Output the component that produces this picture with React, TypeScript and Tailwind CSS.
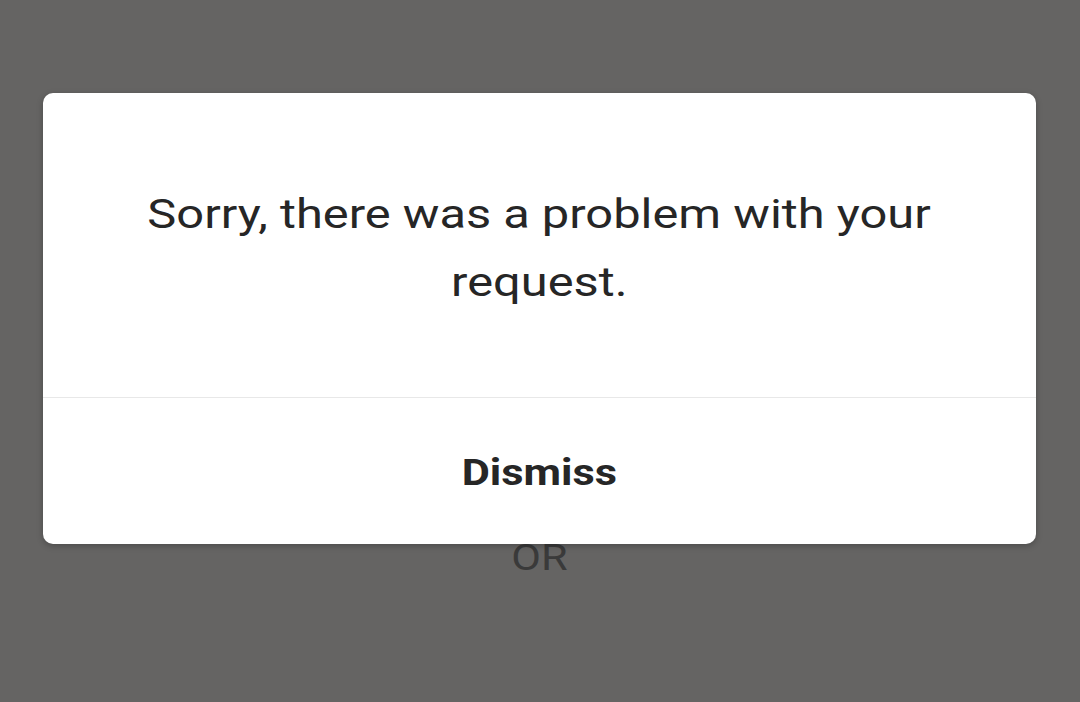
const App: React.FC = () => {
  return (
    <div className="h-[702px] w-[1080px] overflow-hidden bg-[#656463] font-['Roboto',sans-serif]">
      <div className="pt-[93px] pl-[43px] pr-[44px]">
        <div className="relative z-10 rounded-[10px] bg-white shadow-[0_2px_6px_rgba(0,0,0,0.25)]">
          <div className="flex h-[304px] flex-col items-center justify-center pt-[8px] text-center text-[40px] leading-[68px] text-[#262626]">
            <p className="scale-x-[1.22] whitespace-nowrap">Sorry, there was a problem with your</p>
            <p className="scale-x-[1.22]">request.</p>
          </div>
          <div className="h-px bg-[#e8e8e8]" />
          <div className="flex h-[146px] items-center justify-center pt-[3px] text-[37px] font-bold text-[#262626]">
            <span className="scale-x-[1.17]">Dismiss</span>
          </div>
        </div>
        <div className="-mt-[8px] flex justify-center">
          <span className="scale-x-[1.2] text-[36px] leading-[44px] text-[#3a3a3a]">OR</span>
        </div>
      </div>
    </div>
  )
}

export default App
